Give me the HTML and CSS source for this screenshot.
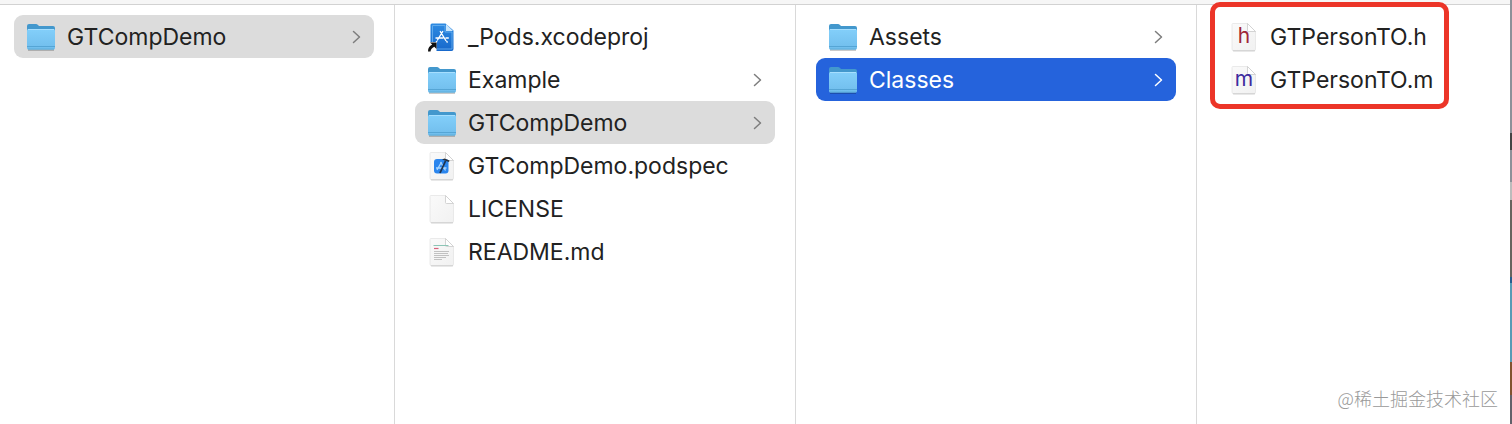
FILE: index.html
```
<!DOCTYPE html>
<html lang="zh-CN">
<head>
    <meta charset="UTF-8">
    <meta name="viewport" content="width=device-width, initial-scale=1.0">
    <title>GTCompDemo</title>
    <link rel="stylesheet" href="styles.css">
</head>
<body>
    <!-- Shared icons -->
    <svg class="sprite" aria-hidden="true">
        <defs>
            <linearGradient id="folder-front" x1="0" y1="0" x2="0" y2="1">
                <stop offset="0" stop-color="#83cffa"/>
                <stop offset="1" stop-color="#70bdec"/>
            </linearGradient>
            <linearGradient id="paper" x1="0" y1="0" x2="1" y2="1">
                <stop offset="0" stop-color="#fafafa"/>
                <stop offset="1" stop-color="#f1f1f1"/>
            </linearGradient>
            <linearGradient id="project-blue" x1="0" y1="0" x2="0" y2="1">
                <stop offset="0" stop-color="#2e8be2"/>
                <stop offset="1" stop-color="#1768cb"/>
            </linearGradient>
        </defs>
        <symbol id="icon-folder" viewBox="0 0 30 30">
            <path d="M2 28h26" stroke="#000" stroke-opacity=".3" stroke-width="1.4"/>
            <path d="M1 4q0-2 2-2h7q1 0 2 1l1 1h14q2 0 2 2v4H1z" fill="#4398cd"/>
            <rect x="1" y="7" width="28" height="20.5" rx="1.5" fill="url(#folder-front)"/>
            <path d="M2 7.5h26" stroke="#a6dfff" stroke-width="1"/>
            <path d="M1 24.5h28" stroke="#55a5d5" stroke-width="1"/>
            <path d="M2 27h26" stroke="#5faedb" stroke-width="1"/>
        </symbol>
        <symbol id="icon-paper" viewBox="0 0 30 30">
            <path d="M4 1.5h14.5l8 8V27q0 2-2 2H5q-2 0-2-2V2.5q0-1 1-1z" fill="url(#paper)" stroke="#e4e4e4" stroke-width=".8"/>
            <path d="M4 28.8h22" stroke="#cccccc" stroke-width="1"/>
            <path d="M18.5 1.5l8 8h-7q-1 0-1-1z" fill="#fff" stroke="#cacaca" stroke-width=".8"/>
        </symbol>
        <symbol id="icon-chevron" viewBox="0 0 9 14">
            <path d="M1.5 1.5L7.5 7l-6 5.5" fill="none" stroke="currentColor" stroke-width="1.5" stroke-linecap="round" stroke-linejoin="round"/>
        </symbol>
    </svg>

    <div class="finder">
        <div class="toolbar"></div>
        <main class="columns">
            <ul class="column">
                <li><button class="row selected"><svg class="icon"><use href="#icon-folder"/></svg><span class="name">GTCompDemo</span><svg class="chevron"><use href="#icon-chevron"/></svg></button></li>
            </ul>
            <ul class="column">
                <li>
                    <button class="row">
                        <svg class="icon" viewBox="0 0 30 30">
                            <path d="M5 1.500h13.500l8 7V27q0 2-2 2H5q-1.500 0-1.500-1.500V3q0-1.500 1.500-1.500z" fill="url(#project-blue)"/>
                            <path d="M5.500 3.500H18v6.500h7v17H5.500z" fill="none" stroke="#6fb4f0" stroke-width=".8"/>
                            <path d="M19 2v7h7z" fill="#c9e6fd"/>
                            <g stroke="#fff" stroke-width="1.400" stroke-linecap="round" fill="none">
                                <path d="M13.300 9.500l5.500 9M15.700 9.500l-5.200 8.500M9 16h7M19 16h2.300M9.700 19.500l-.4.600M19.800 19.500l.4.600"/>
                            </g>
                            <path d="M1 20h8.500v9.500H1z" fill="#fff"/>
                            <path d="M3 20.500h6.500V27L7.300 24.800Q3.800 26.500 3.500 29.500H1q0-5 4.200-6.900z" fill="#111"/>
                        </svg>
                        <span class="name">_Pods.xcodeproj</span>
                    </button>
                </li>
                <li><button class="row"><svg class="icon"><use href="#icon-folder"/></svg><span class="name">Example</span><svg class="chevron"><use href="#icon-chevron"/></svg></button></li>
                <li><button class="row selected"><svg class="icon"><use href="#icon-folder"/></svg><span class="name">GTCompDemo</span><svg class="chevron"><use href="#icon-chevron"/></svg></button></li>
                <li>
                    <button class="row">
                        <svg class="icon" viewBox="0 0 30 30">
                            <use href="#icon-paper"/>
                            <rect x="7" y="8" width="14.500" height="14.500" rx="3" fill="#2b86ee"/>
                            <path d="M13.500 11l5 8.500M14.500 11l-4.500 8M9 17h10.500" stroke="#a9d6ff" stroke-width="1.300"/>
                            <path d="M18.500 10l-5.500 12" stroke="#1d3350" stroke-width="1.800"/>
                            <path d="M15 8.500l2.500-1 5 2-.5 1.500z" fill="#2a3038"/>
                        </svg>
                        <span class="name">GTCompDemo.podspec</span>
                    </button>
                </li>
                <li><button class="row"><svg class="icon"><use href="#icon-paper"/></svg><span class="name">LICENSE</span></button></li>
                <li>
                    <button class="row">
                        <svg class="icon" viewBox="0 0 30 30">
                            <use href="#icon-paper"/>
                            <path d="M6.500 8.500h15" stroke="#8cc5b6" stroke-width="1"/>
                            <path d="M7 11.500h4.500" stroke="#d8607a" stroke-width="1.200"/>
                            <path d="M7 14.500h15M7 16.500h14M7 18.500h15M7 20.500h12M7 22.500h8" stroke="#b4b4b4" stroke-width=".8"/>
                        </svg>
                        <span class="name">README.md</span>
                    </button>
                </li>
            </ul>
            <ul class="column">
                <li><button class="row"><svg class="icon"><use href="#icon-folder"/></svg><span class="name">Assets</span><svg class="chevron"><use href="#icon-chevron"/></svg></button></li>
                <li><button class="row active"><svg class="icon"><use href="#icon-folder"/></svg><span class="name">Classes</span><svg class="chevron"><use href="#icon-chevron"/></svg></button></li>
            </ul>
            <div class="column">
                <ul class="files">
                    <li><button class="row"><span class="icon source header"><svg><use href="#icon-paper"/></svg><span>h</span></span><span class="name">GTPersonTO.h</span></button></li>
                    <li><button class="row"><span class="icon source"><svg><use href="#icon-paper"/></svg><span>m</span></span><span class="name">GTPersonTO.m</span></button></li>
                </ul>
            </div>
        </main>
    </div>
    <div class="desktop"></div>
    <div class="watermark">@稀土掘金技术社区</div>
</body>
</html>
```
FILE: styles.css
```
* {
    box-sizing: border-box;
}

body {
    display: flex;
    min-height: 100vh;
    margin: 0;
    background-color: #fff;
    color: #222;
    font-family: Inter, "Noto Sans CJK SC", sans-serif;
}

ul {
    list-style: none;
    margin: 0;
    padding: 0;
}

.sprite {
    position: absolute;
    width: 0;
    height: 0;
}

.finder {
    flex: 1;
    display: flex;
    flex-direction: column;
}

.toolbar {
    height: 5px;
    background-color: #f6f6f6;
    border-bottom: 1px solid #d2d2d2;
}

.columns {
    flex: 1;
    display: grid;
    grid-template-columns: 395fr 401fr 401fr 313fr;
}

.column {
    min-width: 0;
    padding: 10px 20px 0;
    border-right: 1px solid #d9d9d9;
}

.column:first-child {
    padding-left: 14px;
}

.column:last-child {
    border-right: none;
}

.row {
    display: flex;
    align-items: center;
    gap: 11px;
    width: 100%;
    height: 43px;
    padding: 0 13px 0 12px;
    border: none;
    border-radius: 9px;
    background: none;
    color: inherit;
    font-family: inherit;
    font-size: 23px;
    text-align: left;
    white-space: nowrap;
}

.row.selected {
    background-color: #dcdcdc;
}

.row.active {
    background-color: #2563dc;
    color: #fff;
}

.icon {
    flex: none;
    width: 30px;
    height: 30px;
}

.name {
    flex: 1;
}

.chevron {
    flex: none;
    width: 9px;
    height: 14px;
    color: #7d7d7d;
}

.active .chevron {
    color: #fff;
}

.files {
    position: relative;
    width: fit-content;
}

/* red frame round the generated files */
.files::after {
    content: "";
    position: absolute;
    inset: -13px -3px -8px -7px;
    border: 5px solid #ec3528;
    border-radius: 10px;
    pointer-events: none;
}

.source {
    display: grid;
    place-items: center;
    color: #3d2b9e;
    font-size: 21px;
    line-height: 24px;
}

.source svg {
    grid-area: 1 / 1;
    width: 30px;
    height: 30px;
}

.source span {
    grid-area: 1 / 1;
    padding-bottom: 2px;
}

.source.header {
    color: #a02638;
}

.desktop {
    width: 2px;
    background: linear-gradient(#8d9098 0 133px, #444 133px 150px, #8d9098 150px 182px, #bbb 182px 200px, #67645f 200px 277px, #275d8e 277px 283px, #579bb5 283px 362px, #815330 362px 395px, #62616a 395px);
}

.watermark {
    position: absolute;
    right: 14px;
    bottom: 13px;
    color: #999;
    font-family: "Noto Sans CJK SC", sans-serif;
    font-size: 18px;
    font-weight: 300;
    line-height: 26px;
}
```
